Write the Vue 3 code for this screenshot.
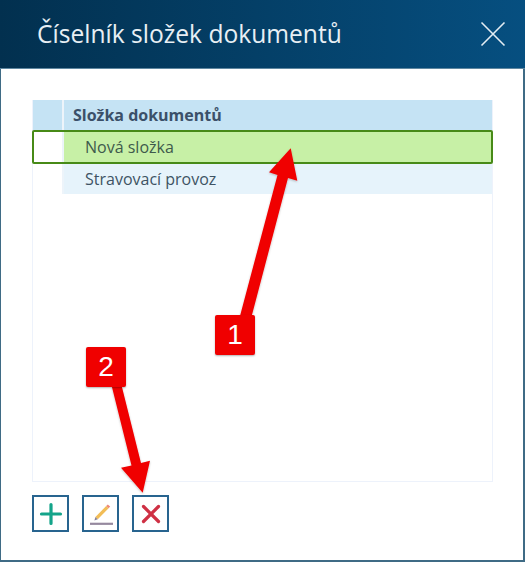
<script setup>
const rows = [
  { name: 'Nová složka', selected: true },
  { name: 'Stravovací provoz', selected: false }
];
</script>

<template>
  <div class="dialog">
    <header class="title-bar">
      <h1>Číselník složek dokumentů</h1>
      <button type="button" class="close" aria-label="Zavřít">
        <svg width="26" height="26" viewBox="0 0 26 26">
          <path d="M1.5 1.5 L24.5 24.5 M24.5 1.5 L1.5 24.5" stroke="#e4edf3" stroke-width="1.6" fill="none" />
        </svg>
      </button>
    </header>

    <div class="body">
      <div class="grid">
        <div class="grid-head">
          <div class="marker"></div>
          <div class="head-cell">Složka dokumentů</div>
        </div>
        <div v-for="row in rows" :key="row.name" class="grid-row" :class="{ selected: row.selected }">
          <div class="marker"></div>
          <div class="cell">{{ row.name }}</div>
        </div>
      </div>

      <div class="toolbar">
        <button type="button" class="tool" aria-label="Přidat">
          <svg width="24" height="24" viewBox="0 0 24 24">
            <path d="M12 2.5 V21.5 M2.5 12 H21.5" stroke="#14a48a" stroke-width="3.2" stroke-linecap="round" fill="none" />
          </svg>
        </button>
        <button type="button" class="tool" aria-label="Upravit">
          <svg width="26" height="26" viewBox="0 0 26 26">
            <path d="M7.4 16 L18.2 5 L20.6 7.2 L9.8 18.2 Z" fill="#f2bd57" />
            <path d="M18.2 5 L19.8 3.4 L22.2 5.6 L20.6 7.2 Z" fill="#ee8a78" />
            <path d="M7.4 16 L9.8 18.2 L6.4 19.6 Z" fill="#8a8296" />
            <path d="M2 22.8 H25" stroke="#96899f" stroke-width="2.2" fill="none" />
          </svg>
        </button>
        <button type="button" class="tool" aria-label="Smazat">
          <svg width="22" height="22" viewBox="0 0 22 22">
            <path d="M3.5 3.5 L18.5 18.5 M18.5 3.5 L3.5 18.5" stroke="#cf3044" stroke-width="3.2" stroke-linecap="round" fill="none" />
          </svg>
        </button>
      </div>
    </div>

    <!-- annotation arrows drawn over the screenshot -->
    <svg class="arrows" width="525" height="562" viewBox="0 0 525 562">
      <defs>
        <filter id="soft" x="-10%" y="-10%" width="120%" height="120%">
          <feDropShadow dx="0" dy="1" stdDeviation="1" flood-color="#000" flood-opacity="0.25" />
        </filter>
      </defs>
      <path filter="url(#soft)" fill="#f00000" d="M240 316 L277.5 175 L269 172.3 L290.7 148.3 L297.3 180.7 L288 178 L251.7 316 Z" />
      <path filter="url(#soft)" fill="#f00000" d="M111.7 386 L131.5 465.5 L121 467.7 L142.7 492.7 L150 460.7 L141 463 L121.7 386 Z" />
    </svg>
    <div class="badge badge-one">1</div>
    <div class="badge badge-two">2</div>
  </div>
</template>

<style scoped>
.dialog {
  position: relative;
  width: 525px;
  height: 562px;
  box-sizing: border-box;
  display: flex;
  flex-direction: column;
  background: #fff;
  border-left: 1px solid #3f6b85;
  border-right: 2px solid #3f6b85;
  border-bottom: 2px solid #3f6b85;
  font-family: "Open Sans", "Noto Sans", sans-serif;
}

.title-bar {
  flex: none;
  height: 69px;
  margin: 0 -2px 0 -1px;
  padding: 0 19px 0 37px;
  display: flex;
  align-items: center;
  justify-content: space-between;
  background: linear-gradient(90deg, #02304f 0%, #064f80 100%);
  border-bottom: 1px solid #5f87a0;
  box-sizing: border-box;
}

.title-bar h1 {
  margin: 0;
  font-size: 24.6px;
  font-weight: 400;
  color: #e8eff4;
  line-height: 30px;
}

.close {
  padding: 0;
  border: none;
  background: none;
  display: flex;
}

.body {
  flex: 1;
  padding: 31px 30px 0 31px;
  display: flex;
  flex-direction: column;
}

.grid {
  height: 382px;
  box-sizing: border-box;
  border: 1px solid #edf2fb;
  border-top: none;
  display: flex;
  flex-direction: column;
}

.grid-head {
  display: flex;
  height: 30px;
  background: #c5e3f4;
  flex: none;
}

.marker {
  width: 29px;
  flex: none;
  border-right: 2px solid #edf4fa;
}

.head-cell {
  padding-left: 9px;
  font-size: 16px;
  font-weight: 700;
  line-height: 30px;
  color: #3b5069;
}

.grid-row {
  display: flex;
  height: 30px;
  flex: none;
  box-sizing: border-box;
}

.grid-row .cell {
  flex: 1;
  padding-left: 21px;
  font-size: 16px;
  line-height: 30px;
  color: #3e5364;
  background: #e6f3fb;
}

.grid-row.selected {
  height: 34px;
  margin: 0 -1px;
  border: 2px solid #478a17;
  border-radius: 2px;
}

.grid-row.selected .marker {
  width: 28px;
}

.grid-row.selected .cell {
  background: #c7f0a6;
  color: #3e5a4c;
}

.toolbar {
  margin-top: 13px;
  display: flex;
  gap: 13px;
}

.tool {
  width: 37px;
  height: 37px;
  padding: 0;
  box-sizing: border-box;
  border: 2px solid #28648f;
  background: #fff;
  display: flex;
  align-items: center;
  justify-content: center;
}

.arrows {
  position: absolute;
  left: -1px;
  top: 0;
  pointer-events: none;
}

.badge {
  position: absolute;
  width: 40px;
  height: 40px;
  border-radius: 2px;
  background: #f00000;
  color: #fff;
  font-family: "Liberation Sans", Arial, sans-serif;
  font-size: 28px;
  line-height: 40px;
  text-align: center;
  box-shadow: 0 1px 2px rgba(0, 0, 0, 0.3);
}

.badge-one {
  left: 214px;
  top: 315px;
}

.badge-two {
  left: 85px;
  top: 347px;
}
</style>

<style>
html, body {
  margin: 0;
  background: #fff;
}
</style>
